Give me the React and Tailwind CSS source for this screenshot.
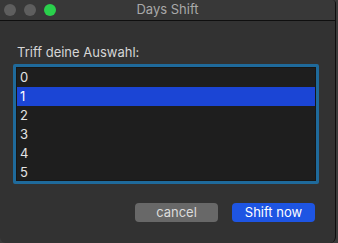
export default function App() {
  const rows = ['0', '1', '2', '3', '4', '5'];
  const selected = 1;

  return (
    <div className="flex h-[243px] w-[338px] bg-[#3b3b3b] font-['Inter','Liberation_Sans',sans-serif] text-[13px]">
      <div className="flex h-[243px] w-[336px] flex-col overflow-hidden rounded-b-[6px] rounded-tr-[4px] border-r border-[#0e0e0e] bg-[#323232]">
        <div className="relative flex h-[21px] shrink-0 items-center border-b border-[#0f0f0f] bg-[#383838] pl-[4px]">
          <div className="flex gap-[8px]">
            <span className="h-[12px] w-[12px] rounded-full bg-[#5e5e5e]" />
            <span className="h-[12px] w-[12px] rounded-full bg-[#5e5e5e]" />
            <span className="h-[12px] w-[12px] rounded-full bg-[#2ad04c]" />
          </div>
          <div className="absolute inset-x-0 top-0 flex h-[20px] items-center justify-center text-[13px] text-[#a9a9a9]">
            Days Shift
          </div>
        </div>

        <div className="flex flex-col pl-[13px] pr-[16px] pt-[23px]">
          <div className="pl-[4px] leading-[16px] text-[#d6d6d6]">Triff deine Auswahl:</div>

          <div className="mt-[4px] h-[120px] w-[306px] rounded-[2px] border-[3px] border-[#1f6a9b] bg-[#1e1e1e]">
            <div className="flex h-full flex-col overflow-hidden border border-[#161616]">
              {rows.map((r, i) => (
                <div
                  key={r}
                  className={
                    i === selected
                      ? 'flex h-[19px] shrink-0 items-center bg-[#1b45d5] pl-[3px] text-white'
                      : 'flex h-[19px] shrink-0 items-center pl-[3px] text-[#e4e4e4]'
                  }
                >
                  {r}
                </div>
              ))}
            </div>
          </div>

          <div className="mt-[19px] flex justify-end gap-[14px] pr-[4px]">
            <button className="h-[19px] w-[83px] rounded-[4px] bg-[#686868] text-[13px] leading-[19px] text-[#dcdcdc]">
              cancel
            </button>
            <button className="h-[19px] w-[83px] rounded-[4px] bg-[#1e55e3] text-[13px] leading-[19px] text-white">
              Shift now
            </button>
          </div>
        </div>
      </div>
    </div>
  );
}
